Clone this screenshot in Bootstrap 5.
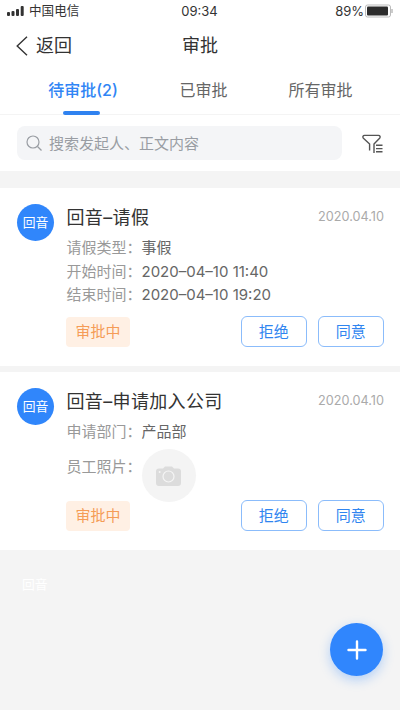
<!DOCTYPE html>
<html lang="zh-CN">
<head>
<meta charset="utf-8">
<meta name="viewport" content="width=device-width, initial-scale=1">
<title>审批</title>
<link href="https://cdn.jsdelivr.net/npm/bootstrap@5.3.0/dist/css/bootstrap.min.css" rel="stylesheet">
<style>
body{font-family:"Inter","Noto Sans CJK SC",sans-serif;background:#f4f4f4;color:#333;font-size:15px;line-height:24px;height:710px;overflow:hidden}
.status-bar{height:22px;font-size:13px;line-height:22px;padding:0 7px 0 6px}
.carrier{font-size:12.6px}
.title-bar{height:46px;padding:2px 16px 0;font-size:18px}
.status-bar>*,.title-bar>*{flex:1 1 0}
.tabs{height:47px;border-bottom:1px solid #f4f4f4}
.tabs .nav-link{color:#666;font-size:16px;line-height:24px;padding:10px 0 0;height:47px}
.tabs .nav-link.active{color:#3085f5;font-weight:500}
.tab-a{width:166px}.tab-b{width:75px}.tab-c{width:159px}
.tabs .active::after{content:"";display:block;width:37px;height:4px;border-radius:2px;background:#2f82f0;margin:9px 0 0 63px}
.search-row{height:56px;padding:11px 16px 0 17px}
.search-box{width:325px;height:34px;border-radius:8px;background:#f4f5f7;color:#999da3;padding:2px 9px 0;gap:7px}
.search-box svg{margin-top:-2px}
.list{margin-top:17px}
.approval{height:178px;padding:16px 16px 0 17px}
.approval+.approval{margin-top:6px}
.avatar{width:37px;height:37px;background:#3086fb;color:#fff;font-size:12.8px;padding-top:1px;flex:none}
.ghost{color:#fff;font-size:12.8px;padding:23px 0 0 22px}
.body-col{margin-left:12.5px}
.name{font-size:18px;line-height:26px;padding-top:1px;letter-spacing:.35px}
.date{font-size:12.7px;color:#aaa;margin-top:-1px}
.fields{line-height:23.5px;color:#666;padding-top:5px}
.fields dt{font-weight:400;color:#999;width:75px;flex:none}
.photo-row{padding-top:5.5px;height:47px}
.photo-row dt{padding-top:6px}
.photo{width:54px;height:53px;background:#f4f4f4}
.controls{gap:11.5px;margin-top:9.5px;margin-left:-.5px;margin-right:.5px}
.state{width:64px;height:30px;border-radius:4px;background:#fff0e4;color:#f59c57;line-height:30px}
.action{width:65.5px;height:31px;border:1px solid #8bbcfb;border-radius:6px;color:#3085f0;font-size:15px;line-height:29px;padding:0;background:#fff}
.fab{width:53px;height:53px;right:17px;bottom:34px;background:#3086fd;box-shadow:0 4px 12px #3086fd55}
</style>
</head>
<body>
<header class="bg-white">
  <div class="status-bar d-flex">
    <div class="d-flex align-items-center">
      <svg width="19" height="10" viewBox="0 0 19 10" fill="#333"><rect x="1" y="6" width="3" height="4" rx="1"/><rect x="5.5" y="5" width="3" height="5" rx="1"/><rect x="10" y="3" width="3" height="7" rx="1"/><rect x="14.7" width="3" height="10" rx="1"/></svg>
      <span class="carrier ms-1">中国电信</span>
    </div>
    <div class="text-center">09:34</div>
    <div class="d-flex align-items-center justify-content-end">
      <span>89%</span>
      <svg width="29" height="14" viewBox="0 0 29 14"><rect x="1.5" y="1" width="25" height="12" rx="2" fill="#fff" stroke="#bbb"/><rect x="3" y="2.5" width="21" height="9" rx="1" fill="#2c2c2c"/><path d="M28 5v4" stroke="#999"/></svg>
    </div>
  </div>
  <div class="title-bar d-flex align-items-center">
    <div class="d-flex align-items-center gap-2"><svg width="12" height="20" viewBox="0 0 12 20" fill="none" stroke="#333" stroke-width="1.4"><path d="M11 .8 1.2 10 11 19.2"/></svg><span>返回</span></div>
    <div class="text-center">审批</div>
    <div></div>
  </div>
  <nav class="tabs nav text-center">
    <a class="nav-link active tab-a" href="#">待审批(2)</a>
    <a class="nav-link tab-b" href="#">已审批</a>
    <a class="nav-link tab-c" href="#">所有审批</a>
  </nav>
  <div class="search-row d-flex align-items-start justify-content-between">
    <div class="search-box d-flex align-items-center">
      <svg width="16" height="16" viewBox="0 0 16 16" fill="none" stroke="#999da3" stroke-width="1.2"><circle cx="7" cy="7" r="6"/><path d="m11.5 11.5 4 4"/></svg>
      <span>搜索发起人、正文内容</span>
    </div>
    <svg class="mt-2" width="22" height="20" viewBox="0 0 22 20" fill="none" stroke="#555" stroke-width="1.4" stroke-linejoin="round"><path d="M7.6 16.5V10L1.4 4.2C.4 2.9 1 1.4 2.5 1.4h14c1.5 0 2.1 1.5 1.1 2.8L12 10v9M14 11.3h6.5M14 14.6h6.5M14 17.8h6.5"/></svg>
  </div>
</header>
<main class="list">
  <article class="approval bg-white d-flex">
    <div class="avatar rounded-circle d-flex align-items-center justify-content-center">回音</div>
    <div class="body-col flex-grow-1">
      <div class="d-flex justify-content-between align-items-center"><div class="name">回音–请假</div><time class="date">2020.04.10</time></div>
      <dl class="fields mb-0">
        <div class="d-flex"><dt>请假类型：</dt><dd class="mb-0">事假</dd></div>
        <div class="d-flex"><dt>开始时间：</dt><dd class="mb-0">2020–04–10 11:40</dd></div>
        <div class="d-flex"><dt>结束时间：</dt><dd class="mb-0">2020–04–10 19:20</dd></div>
      </dl>
      <div class="controls d-flex align-items-center"><span class="state text-center me-auto">审批中</span><button class="btn action">拒绝</button><button class="btn action">同意</button></div>
    </div>
  </article>
  <article class="approval bg-white d-flex">
    <div class="avatar rounded-circle d-flex align-items-center justify-content-center">回音</div>
    <div class="body-col flex-grow-1">
      <div class="d-flex justify-content-between align-items-center"><div class="name">回音–申请加入公司</div><time class="date">2020.04.10</time></div>
      <dl class="fields mb-0">
        <div class="d-flex"><dt>申请部门：</dt><dd class="mb-0">产品部</dd></div>
        <div class="photo-row d-flex"><dt>员工照片：</dt><dd class="photo rounded-circle d-flex align-items-center justify-content-center mb-0"><svg width="25" height="20" viewBox="0 0 25 20"><path fill="#dcdcdc" d="M3 2.5h4L9 .5h7l2 2h4a3 3 0 0 1 3 3V17a3 3 0 0 1-3 3H3a3 3 0 0 1-3-3V5.5a3 3 0 0 1 3-3z"/><circle cx="12.5" cy="10.5" r="5.5" fill="none" stroke="#f5f5f5" stroke-width="1.2"/><circle cx="3.6" cy="6" r="1" fill="#f5f5f5"/></svg></dd></div>
      </dl>
      <div class="controls d-flex align-items-center"><span class="state text-center me-auto">审批中</span><button class="btn action">拒绝</button><button class="btn action">同意</button></div>
    </div>
  </article>
  <div class="ghost">回音</div>
</main>
<button class="fab btn border-0 rounded-circle position-fixed p-0 d-flex align-items-center justify-content-center" aria-label="新建"><svg width="20" height="20" viewBox="0 0 20 20" stroke="#fff" stroke-width="2.4" stroke-linecap="round"><path d="M10 1.5v17M1.5 10h17"/></svg></button>
<script src="https://cdn.jsdelivr.net/npm/bootstrap@5.3.0/dist/js/bootstrap.bundle.min.js"></script>
</body>
</html>
